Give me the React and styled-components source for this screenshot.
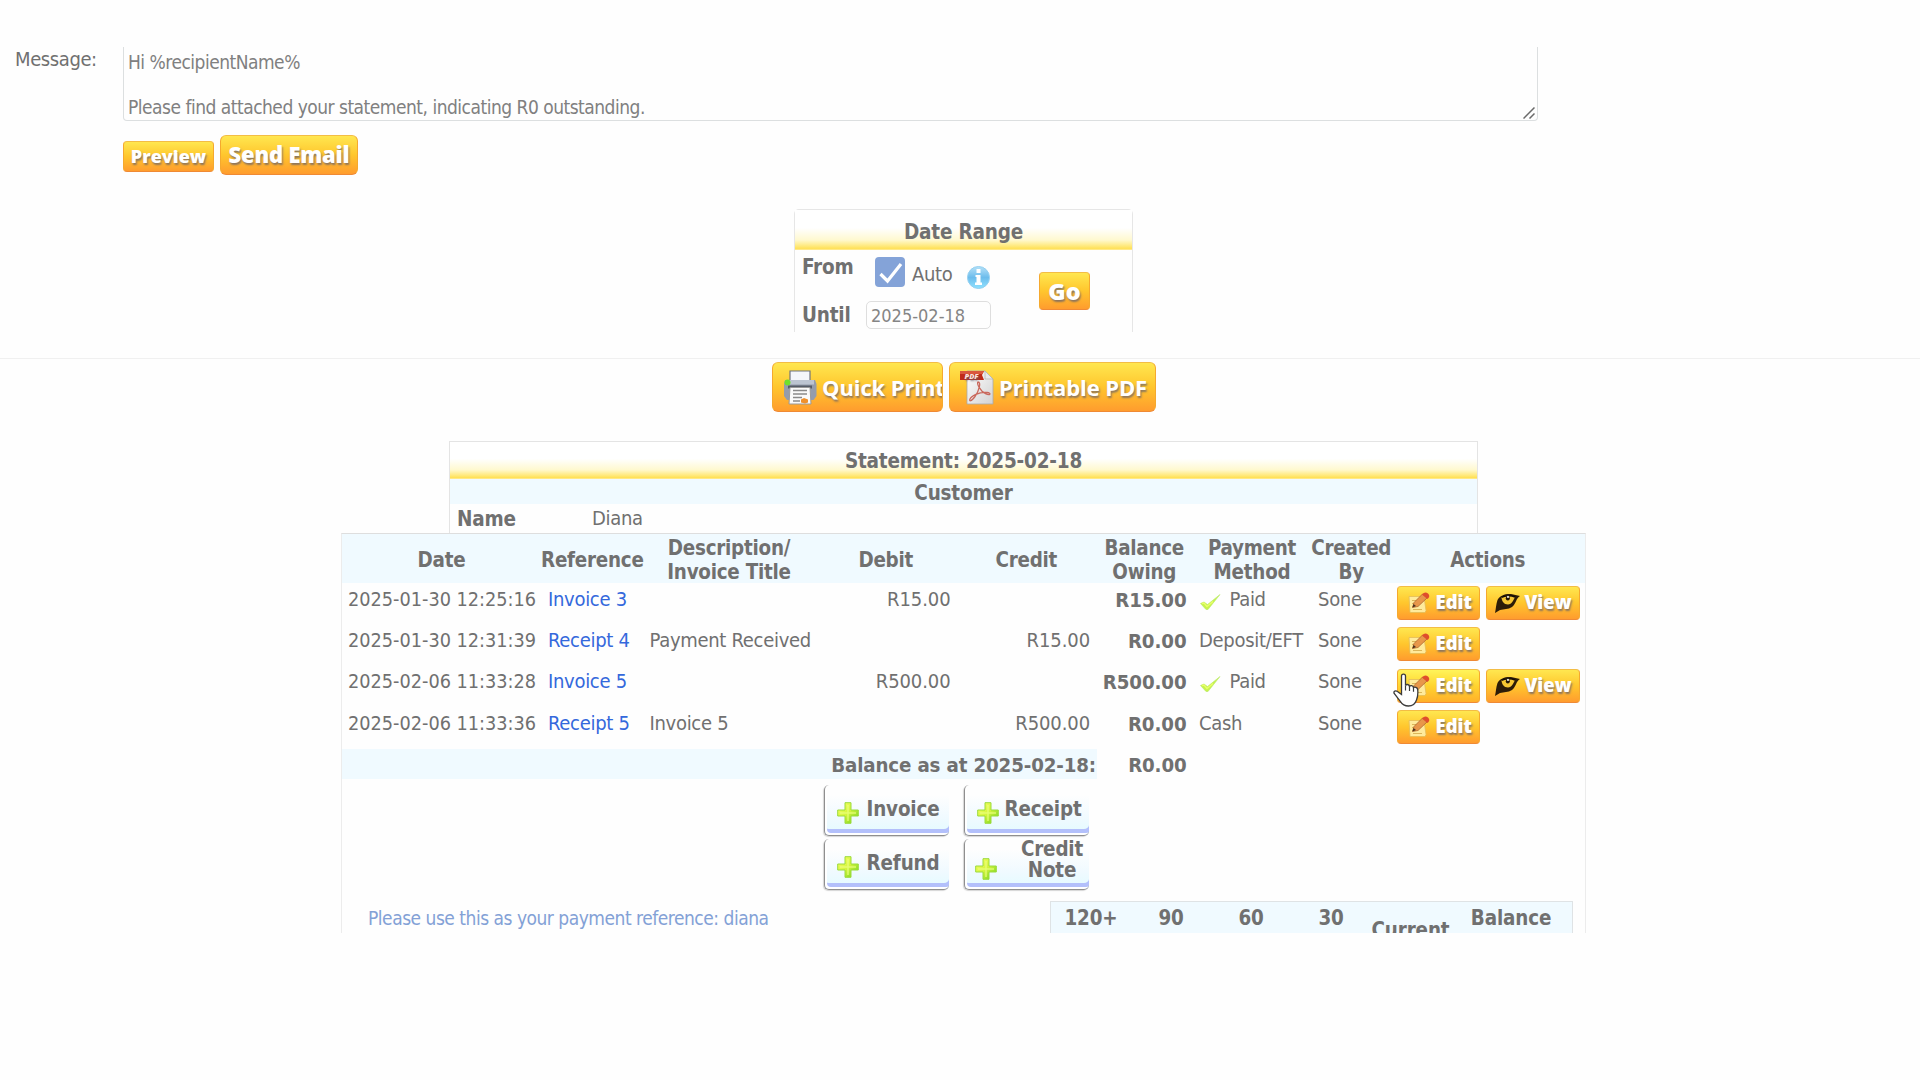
import React from 'react'
import styled, {createGlobalStyle} from 'styled-components'

const transactions = [
    {date: '2025-01-30 12:25:16', reference: 'Invoice 3', debit: 'R15.00', balance: 'R15.00', method: 'Paid', paid: true, user: 'Sone', view: true},
    {date: '2025-01-30 12:31:39', reference: 'Receipt 4', title: 'Payment Received', credit: 'R15.00', balance: 'R0.00', method: 'Deposit/EFT', user: 'Sone'},
    {date: '2025-02-06 11:33:28', reference: 'Invoice 5', debit: 'R500.00', balance: 'R500.00', method: 'Paid', paid: true, user: 'Sone', view: true, hovered: true},
    {date: '2025-02-06 11:33:36', reference: 'Receipt 5', title: 'Invoice 5', credit: 'R500.00', balance: 'R0.00', method: 'Cash', user: 'Sone'},
];

const PrinterIcon = () => (
    <svg width="34" height="35" viewBox="0 0 34 35">
        <path d="M7 1h20v10H7z" fill="#f4f6fa" stroke="#6f747e" strokeWidth="1.200"/>
        <path d="M2 10h30l1.500 4v12l-3 4H4l-3-4V14z" fill="#949cab"/>
        <path d="M3 10h28v4.500H3z" fill="#bcc4d1"/>
        <path d="M5 15.500h24v3H5z" fill="#565c68"/>
        <circle cx="4.500" cy="12.500" r="3" fill="#6fe02a"/>
        <path d="M7 17.500h20l1 16.500H6z" fill="#fafafa" stroke="#999"/>
        <path d="M10 20.500h14M10 24h14M10 27.500h9M10 31h7" stroke="#8a8a8a" strokeWidth="1.300"/>
        <path d="M18 29.500l3-1.500 4 1.500v3l-3 1-4-1z" fill="#f0912c"/>
    </svg>
);

const PdfIcon = () => (
    <svg width="34" height="35" viewBox="0 0 34 35">
        <defs>
            <linearGradient id="sheet" x1="0" y1="0" x2="1" y2="1">
                <stop offset="0" stopColor="#fff"/>
                <stop offset="1" stopColor="#d2d2d2"/>
            </linearGradient>
        </defs>
        <path d="M7 1h18l8 8v25H7z" fill="url(#sheet)" stroke="#aaa" strokeWidth=".8"/>
        <path d="M25 1v8h8z" fill="#e9e9e9" stroke="#aaa" strokeWidth=".6"/>
        <path d="M18 12c3.500 0 1 9-3 14.500s-6 5-5 2.500 9-7.500 17-6.500c5 .7 3 3.500-1.500 1.200C20 21 16.500 13.500 18 12z" fill="none" stroke="#c9685c" strokeWidth="1.300"/>
        <path d="M0 1h24l-2 4 2 5H0z" fill="#c02a18"/>
        <path d="M0 1h24l-1.500 3H0z" fill="#d9573e"/>
        <text x="11.500" y="8.500" textAnchor="middle" fontFamily="Open Sans, sans-serif" fontSize="7.500" fontStyle="italic" fontWeight="800" fill="#fbe3dd">PDF</text>
    </svg>
);

const InfoIcon = () => (
    <svg width="23" height="23" viewBox="0 0 23 23">
        <defs>
            <linearGradient id="info" x1="0" y1="0" x2="0" y2="1">
                <stop offset="0" stopColor="#b5e1f8"/>
                <stop offset=".5" stopColor="#6cbcec"/>
                <stop offset="1" stopColor="#8fe2ff"/>
            </linearGradient>
        </defs>
        <circle cx="11.500" cy="11.500" r="11" fill="url(#info)" stroke="#93cff0"/>
        <path d="M9.500 3h4v4h-4zM8.500 9h5v7.500H15V19H8v-2.500h1.500V11h-1z" fill="#fff"/>
    </svg>
);

const EditIcon = () => (
    <svg width="22" height="22" viewBox="0 0 22 22">
        <path d="M1 4.500h15l2 14-1 2H2z" fill="#ffeb9c" stroke="#e3bd58" strokeWidth=".8"/>
        <path d="M4 8.500h6M4 11.500h4M4 14.500h3M5 17.500h9" stroke="#dbb65a"/>
        <path d="M4.500 15.500l1.500-5L14.500 2l4.500 4-9 8.500z" fill="#e8974a" stroke="#a8602a" strokeWidth=".7"/>
        <path d="M4.500 15.500l1-3.500 2.500 2z" fill="#4a3320"/>
        <path d="M14 2.500C16 0 18-.2 20 1.500s1.500 4-.5 5.500z" fill="#df4e2c"/>
    </svg>
);

const EyeIcon = () => (
    <svg width="25" height="20" viewBox="0 0 25 20">
        <path d="M0 20C1 16 1 11 2.500 7 5 2 11 .5 16 1l9 2c-4 2-4 8-8 11-4 2.500-8 2-12 3z" fill="#2c1c08"/>
        <path d="M6.500 4C9 2.500 17 2 20 4c-2 4-3 7-7 7.500C9 11.500 6.500 8 6.500 4z" fill="#f6c733"/>
        <path d="M6.500 4.300C10 2.500 16 2 20 4" stroke="#120b04" strokeWidth="1.600" fill="none"/>
        <ellipse cx="12.800" cy="5.300" rx="2" ry="2.300" fill="#241806"/>
        <circle cx="13" cy="3.900" r="1.100" fill="#e8e4d8"/>
    </svg>
);

const TickIcon = () => (
    <svg width="21" height="16" viewBox="0 0 21 16">
        <path d="M.5 9.500L4 8l3.500 2.500L20 .5 8 15.500H6z" fill="#c6f44c" stroke="#b9e76a" strokeWidth=".6"/>
        <path d="M2 9.500l2-.5 3 3.500 6-5" fill="none" stroke="#e9ff6a" strokeWidth="1.300"/>
    </svg>
);

const PlusIcon = () => (
    <svg width="22" height="22" viewBox="0 0 22 22">
        <defs>
            <linearGradient id="plus" x1="0" y1="0" x2="1" y2="1">
                <stop offset="0" stopColor="#fdff6b"/>
                <stop offset=".5" stopColor="#d3f53c"/>
                <stop offset="1" stopColor="#67cf1c"/>
            </linearGradient>
        </defs>
        <path d="M8 .7h6v7.300h7.300v6H14v7.300H8V14H.7V8H8z" fill="url(#plus)" stroke="#9adb3c"/>
        <path d="M11 3v16M3 11h16" stroke="#eaff7e" strokeWidth="1.500" opacity=".8"/>
    </svg>
);

const ResizeGrip = () => (
    <svg width="12" height="12" viewBox="0 0 12 12">
        <path d="M.5 11.500l11-11M6.500 11.500l5-5" stroke="#6a6a6a" strokeWidth="1.500"/>
    </svg>
);

const HandIcon = () => (
    <svg width="27" height="34" viewBox="0 0 27 34">
        <path
            d="M8.500 3c0-2.600 4-2.600 4 0v9.500c.5-1.500 3.700-1.400 4 .8 1-1.300 3.700-.8 4 1.300 1.200-1 4-.4 4.200 2 .4 3.800.2 7-1.200 10.400-1.300 4-3.600 6-8 6-4 0-6.300-1.600-8.200-4.700L1.200 20.500c-1-2.200 1.500-3.500 3.300-2l4 3z"
            fill="#fff" stroke="#3b3b3b" strokeWidth="1.300"/>
        <path d="M12.500 12.500v5M16.500 13.500v4.500M20.500 14.800v4" stroke="#3b3b3b" strokeWidth="1.200"/>
    </svg>
);

const App = () => {

    const renderActions = ({view, hovered}) => (
        <Actions>
            <SmallButton $hovered={hovered}>
                <EditIcon/><span>Edit</span>
                {hovered && <Pointer><HandIcon/></Pointer>}
            </SmallButton>
            {view && <SmallButton $view><EyeIcon/><span>View</span></SmallButton>}
        </Actions>
    );

    return (
        <Page>
            <GlobalStyle/>
            <MessageRow>
                <MessageLabel>Message:</MessageLabel>
                <div>
                    <MessageBox>
                        {'Hi %recipientName%\n\nPlease find attached your statement, indicating R0 outstanding.'}
                        <Grip><ResizeGrip/></Grip>
                    </MessageBox>
                    <MessageButtons>
                        <PreviewButton>Preview</PreviewButton>
                        <SendButton>Send Email</SendButton>
                    </MessageButtons>
                </div>
            </MessageRow>

            <DateRange>
                <YellowTitle $height={40}>Date Range</YellowTitle>
                <DateBody>
                    <DateFields>
                        <FromRow>
                            <strong>From</strong>
                            <Checkbox>
                                <svg width="30" height="30" viewBox="0 0 30 30">
                                    <path d="M5.500 17l7 7L26 7" fill="none" stroke="#fff" strokeWidth="3.200"/>
                                </svg>
                            </Checkbox>
                            <AutoLabel>Auto</AutoLabel>
                            <InfoIcon/>
                        </FromRow>
                        <UntilRow>
                            <strong>Until</strong>
                            <DateInput>2025-02-18</DateInput>
                        </UntilRow>
                    </DateFields>
                    <GoButton>Go</GoButton>
                </DateBody>
            </DateRange>

            <Divider/>

            <PrintButtons>
                <PrintButton $width={171}><PrinterIcon/><span>Quick Print</span></PrintButton>
                <PrintButton $width={207}><PdfIcon/><span>Printable PDF</span></PrintButton>
            </PrintButtons>

            <Statement>
                <YellowTitle $height={37}>Statement: 2025-02-18</YellowTitle>
                <CustomerBand>Customer</CustomerBand>
                <NameRow><strong>Name</strong><span>Diana</span></NameRow>
            </Statement>

            <Table>
                <HeaderRow>
                    <span>Date</span>
                    <span>Reference</span>
                    <span>Description/<br/>Invoice Title</span>
                    <span>Debit</span>
                    <span>Credit</span>
                    <span>Balance<br/>Owing</span>
                    <span>Payment<br/>Method</span>
                    <span>Created<br/>By</span>
                    <span>Actions</span>
                </HeaderRow>
                {transactions.map((item) => (
                    <Row key={item.date}>
                        <DateCell>{item.date}</DateCell>
                        <Cell><Link>{item.reference}</Link></Cell>
                        <Cell>{item.title}</Cell>
                        <Cell $right>{item.debit}</Cell>
                        <Cell $right>{item.credit}</Cell>
                        <Cell $right $bold>{item.balance}</Cell>
                        <Cell>{item.paid && <Tick><TickIcon/></Tick>}{item.method}</Cell>
                        <Cell>{item.user}</Cell>
                        {renderActions(item)}
                    </Row>
                ))}
                <BalanceRow>
                    <BalanceLabel>Balance as at 2025-02-18:</BalanceLabel>
                    <BalanceTotal>R0.00</BalanceTotal>
                </BalanceRow>
                <AddButtons>
                    <AddButton><PlusIcon/><span>Invoice</span></AddButton>
                    <AddButton><PlusIcon/><span>Receipt</span></AddButton>
                    <AddButton><PlusIcon/><span>Refund</span></AddButton>
                    <AddButton $twoLines><PlusIcon/><span>Credit<br/>Note</span></AddButton>
                </AddButtons>
                <Footer>
                    <PaymentNote>Please use this as your payment reference: diana</PaymentNote>
                    <Ageing>
                        <span>120+</span>
                        <span>90</span>
                        <span>60</span>
                        <span>30</span>
                        <Current>Current</Current>
                        <span>Balance</span>
                    </Ageing>
                </Footer>
            </Table>
        </Page>
    )
};

const GlobalStyle = createGlobalStyle`
    * {
        box-sizing: border-box;
    }
    body {
        margin: 0;
        background: #fefefe;
        color: #707070;
        font-family: 'DejaVu Sans Condensed', 'DejaVu Sans', sans-serif;
        font-stretch: condensed;
        font-size: 20px;
        line-height: 24px;
    }
    svg {
        display: block;
        flex: none;
    }
    strong {
        font-size: 20.5px;
        letter-spacing: -0.2px;
    }
`

const Page = styled.div`
    width: 1920px;
    height: 933px;
    padding-top: 47px;
    overflow: hidden;
`

const MessageRow = styled.div`
    display: flex;
    height: 162px;
    padding-left: 15px;
`

const MessageLabel = styled.div`
    width: 108px;
    letter-spacing: -0.4px;
`

const MessageBox = styled.div`
    position: relative;
    width: 1415px;
    height: 74px;
    padding: 4px 4px;
    border: 1px solid #dcdfe0;
    border-top: 0;
    border-radius: 0 0 4px 4px;
    font-size: 19px;
    line-height: 22.5px;
    letter-spacing: -0.5px;
    color: #808080;
    white-space: pre-line;
`

const Grip = styled.div`
    position: absolute;
    right: 2px;
    bottom: 1px;
`

const MessageButtons = styled.div`
    display: flex;
    align-items: flex-start;
    gap: 6px;
    margin-top: 14px;
`

const YellowButton = styled.button`
    display: flex;
    align-items: center;
    justify-content: center;
    padding: 0;
    border: 1px solid #f5a92e;
    border-top-color: #f3bd45;
    border-bottom-color: #ef8a35;
    border-radius: 4px;
    background: linear-gradient(#ffe750, #ffc62d 50%, #ff9c2e);
    color: #fff;
    font-family: 'Open Sans', sans-serif;
    font-weight: 800;
    text-shadow: 1px 2px 2px rgba(100, 95, 110, 0.75);
    white-space: nowrap;
`

const PreviewButton = styled(YellowButton)`
    width: 91px;
    height: 31px;
    margin-top: 6px;
    padding-bottom: 1px;
    font-size: 18px;
`

const SendButton = styled(YellowButton)`
    width: 138px;
    height: 40px;
    padding: 0 0 2px;
    border-radius: 6px;
    font-size: 22px;
    letter-spacing: -0.2px;
`

const DateRange = styled.div`
    width: 339px;
    height: 123px;
    margin: 0 0 0 794px;
    border: 1px solid #e6e6e6;
    border-bottom: 0;
    border-radius: 5px 5px 0 0;
`

const YellowTitle = styled.div`
    height: ${props => props.$height}px;
    padding-top: ${props => props.$height === 40 ? 10 : 7}px;
    background: linear-gradient(#fff 45%, #fff9cf 75%, #ffe877 91%, #ffe159 96%, #ffec9c);
    text-align: center;
    font-size: 20.5px;
    font-weight: bold;
    letter-spacing: -0.2px;
`

const DateBody = styled.div`
    display: flex;
    justify-content: space-between;
    padding: 5px 42px 0 7px;
`

const DateFields = styled.div`
    width: 190px;
`

const FromRow = styled.div`
    display: flex;
    align-items: flex-start;
    height: 45px;
    strong {
        width: 73px;
    }
    > svg {
        margin: 11px 0 0 13px;
    }
`

const Checkbox = styled.div`
    width: 30px;
    height: 30px;
    margin-top: 2px;
    border-radius: 4px;
    background: #84a3d8;
`

const AutoLabel = styled.span`
    width: 42px;
    margin: 7px 0 0 7px;
    letter-spacing: -0.3px;
`

const UntilRow = styled.div`
    display: flex;
    strong {
        width: 64px;
        margin-top: 3px;
    }
`

const DateInput = styled.div`
    width: 125px;
    height: 28px;
    margin-top: 1px;
    padding: 2px 4px;
    border: 1px solid #dedede;
    border-radius: 5px;
    font-size: 18px;
    color: #858585;
`

const GoButton = styled(YellowButton)`
    width: 51px;
    height: 38px;
    margin-top: 17px;
    font-size: 23.5px;
`

const Divider = styled.div`
    margin: 26px 0 3px;
    border-top: 1px solid #f0f0f0;
`

const PrintButtons = styled.div`
    display: flex;
    gap: 6px;
    padding-left: 772px;
`

const PrintButton = styled(YellowButton)`
    justify-content: flex-start;
    width: ${props => props.$width}px;
    height: 50px;
    padding-left: 10px;
    gap: 5px;
    border-radius: 6px;
    overflow: hidden;
    font-size: 22px;
    letter-spacing: -0.1px;
    font-weight: 700;
`

const Statement = styled.div`
    width: 1029px;
    height: 92px;
    margin: 29px 0 0 449px;
    border: 1px solid #e4e4e4;
    border-bottom: 0;
`

const CustomerBand = styled.div`
    height: 25px;
    padding-top: 2px;
    background: #f0faff;
    text-align: center;
    font-size: 20.5px;
    font-weight: bold;
    letter-spacing: -0.2px;
`

const NameRow = styled.div`
    display: flex;
    padding: 2px 0 0 7px;
    strong {
        width: 135px;
        padding-top: 1px;
    }
    span {
        letter-spacing: -0.3px;
    }
`

const Table = styled.div`
    width: 1245px;
    height: 450px;
    margin-left: 341px;
    border: 1px solid #ececec;
    border-top-color: #dedede;
`

const Row = styled.div`
    display: grid;
    grid-template-columns: 200px 101.500px 172px 141.500px 139.500px 96.500px 119px 79.500px 1fr;
    height: 41.400px;
`

const HeaderRow = styled(Row)`
    align-items: center;
    height: 49px;
    padding-top: 2px;
    background: #f0faff;
    text-align: center;
    font-size: 20.4px;
    font-weight: bold;
    white-space: nowrap;
    letter-spacing: -0.25px;
    span {
        margin-left: -1px;
    }
`

const Cell = styled.div`
    display: flex;
    justify-content: ${props => props.$right ? 'flex-end' : 'flex-start'};
    padding: ${props => props.$bold ? 4.500 : 3.500}px 6.500px 0 6px;
    font-size: ${props => props.$bold ? 20.3 : 20}px;
    font-weight: ${props => props.$bold ? 'bold' : 'normal'};
    letter-spacing: ${props => props.$bold || props.$right ? -0.1 : -0.300}px;
    white-space: nowrap;
`

const DateCell = styled(Cell)`
    padding-top: 4.5px;
    font-size: 19.7px;
    letter-spacing: 0;
`

const Link = styled.a`
    color: #3468dc;
`

const Tick = styled.span`
    width: 30.5px;
    padding: 7px 0 0 1px;
`

const Actions = styled.div`
    display: flex;
    gap: 6px;
    padding: 3px 0 0 5px;
`

const SmallButton = styled(YellowButton)`
    position: relative;
    justify-content: flex-start;
    width: ${props => props.$view ? 94 : 83}px;
    height: 34px;
    padding-left: ${props => props.$view ? 8 : 10}px;
    gap: ${props => props.$view ? 5 : 6}px;
    font-size: 18.5px;
    ${props => props.$hovered && 'background: linear-gradient(#fff45a, #ffd42f 50%, #ffb02a);'}
    span {
        margin-top: -3px;
    }
`

const Pointer = styled.div`
    position: absolute;
    left: -5px;
    top: 3px;
`

const BalanceRow = styled.div`
    display: flex;
    height: 30px;
    font-size: 20.3px;
    font-weight: bold;
    line-height: 32px;
    letter-spacing: -0.14px;
`

const BalanceLabel = styled.div`
    width: 755px;
    padding-right: 1px;
    background: #f0faff;
    text-align: right;
`

const BalanceTotal = styled.div`
    width: 89.5px;
    text-align: right;
`

const AddButtons = styled.div`
    display: grid;
    grid-template-columns: 125px 125px;
    gap: 3px 15px;
    padding: 6px 0 0 482px;
`

const AddButton = styled.button`
    display: flex;
    height: 51px;
    padding: ${props => props.$twoLines ? 0 : '12px 0 0 11px'};
    padding-left: ${props => props.$twoLines ? 10 : 12}px;
    border: 0 solid #8f8f8f;
    border-width: 0 0 1px 1px;
    border-radius: 5px;
    background: linear-gradient(#fefefe 20%, #f0faff 65%, #e2fbff);
    box-shadow: inset 2px -2px 0 #fff, inset 0 -6px 0 #b3c0fb, -1px 1px 1px #d5d5d5;
    color: #707070;
    font-family: inherit;
    font-stretch: condensed;
    font-size: 20.4px;
    font-weight: bold;
    letter-spacing: -0.15px;
    line-height: ${props => props.$twoLines ? 21 : 24}px;
    svg {
        margin-top: ${props => props.$twoLines ? 19 : 5}px;
    }
    span {
        flex: 1;
        text-align: center;
        padding-left: ${props => props.$twoLines ? 18 : 0}px;
        padding-right: ${props => props.$twoLines ? 0 : 2}px;
    }
`

const Footer = styled.div`
    display: flex;
    justify-content: space-between;
    align-items: flex-start;
    padding: 11px 12px 0 26px;
`

const PaymentNote = styled.div`
    padding-top: 5px;
    font-size: 19px;
    letter-spacing: -0.48px;
    color: #83a1d6;
`

const Ageing = styled.div`
    display: grid;
    grid-template-columns: 80px 80px 80px 80px 79px 1fr;
    width: 523px;
    height: 60px;
    padding-top: 4px;
    border: 1px solid #dfe3e5;
    background: #f0faff;
    text-align: center;
    font-size: 20.4px;
    font-weight: bold;
    letter-spacing: -0.15px;
`

const Current = styled.span`
    padding-top: 12px;
`

export default App
